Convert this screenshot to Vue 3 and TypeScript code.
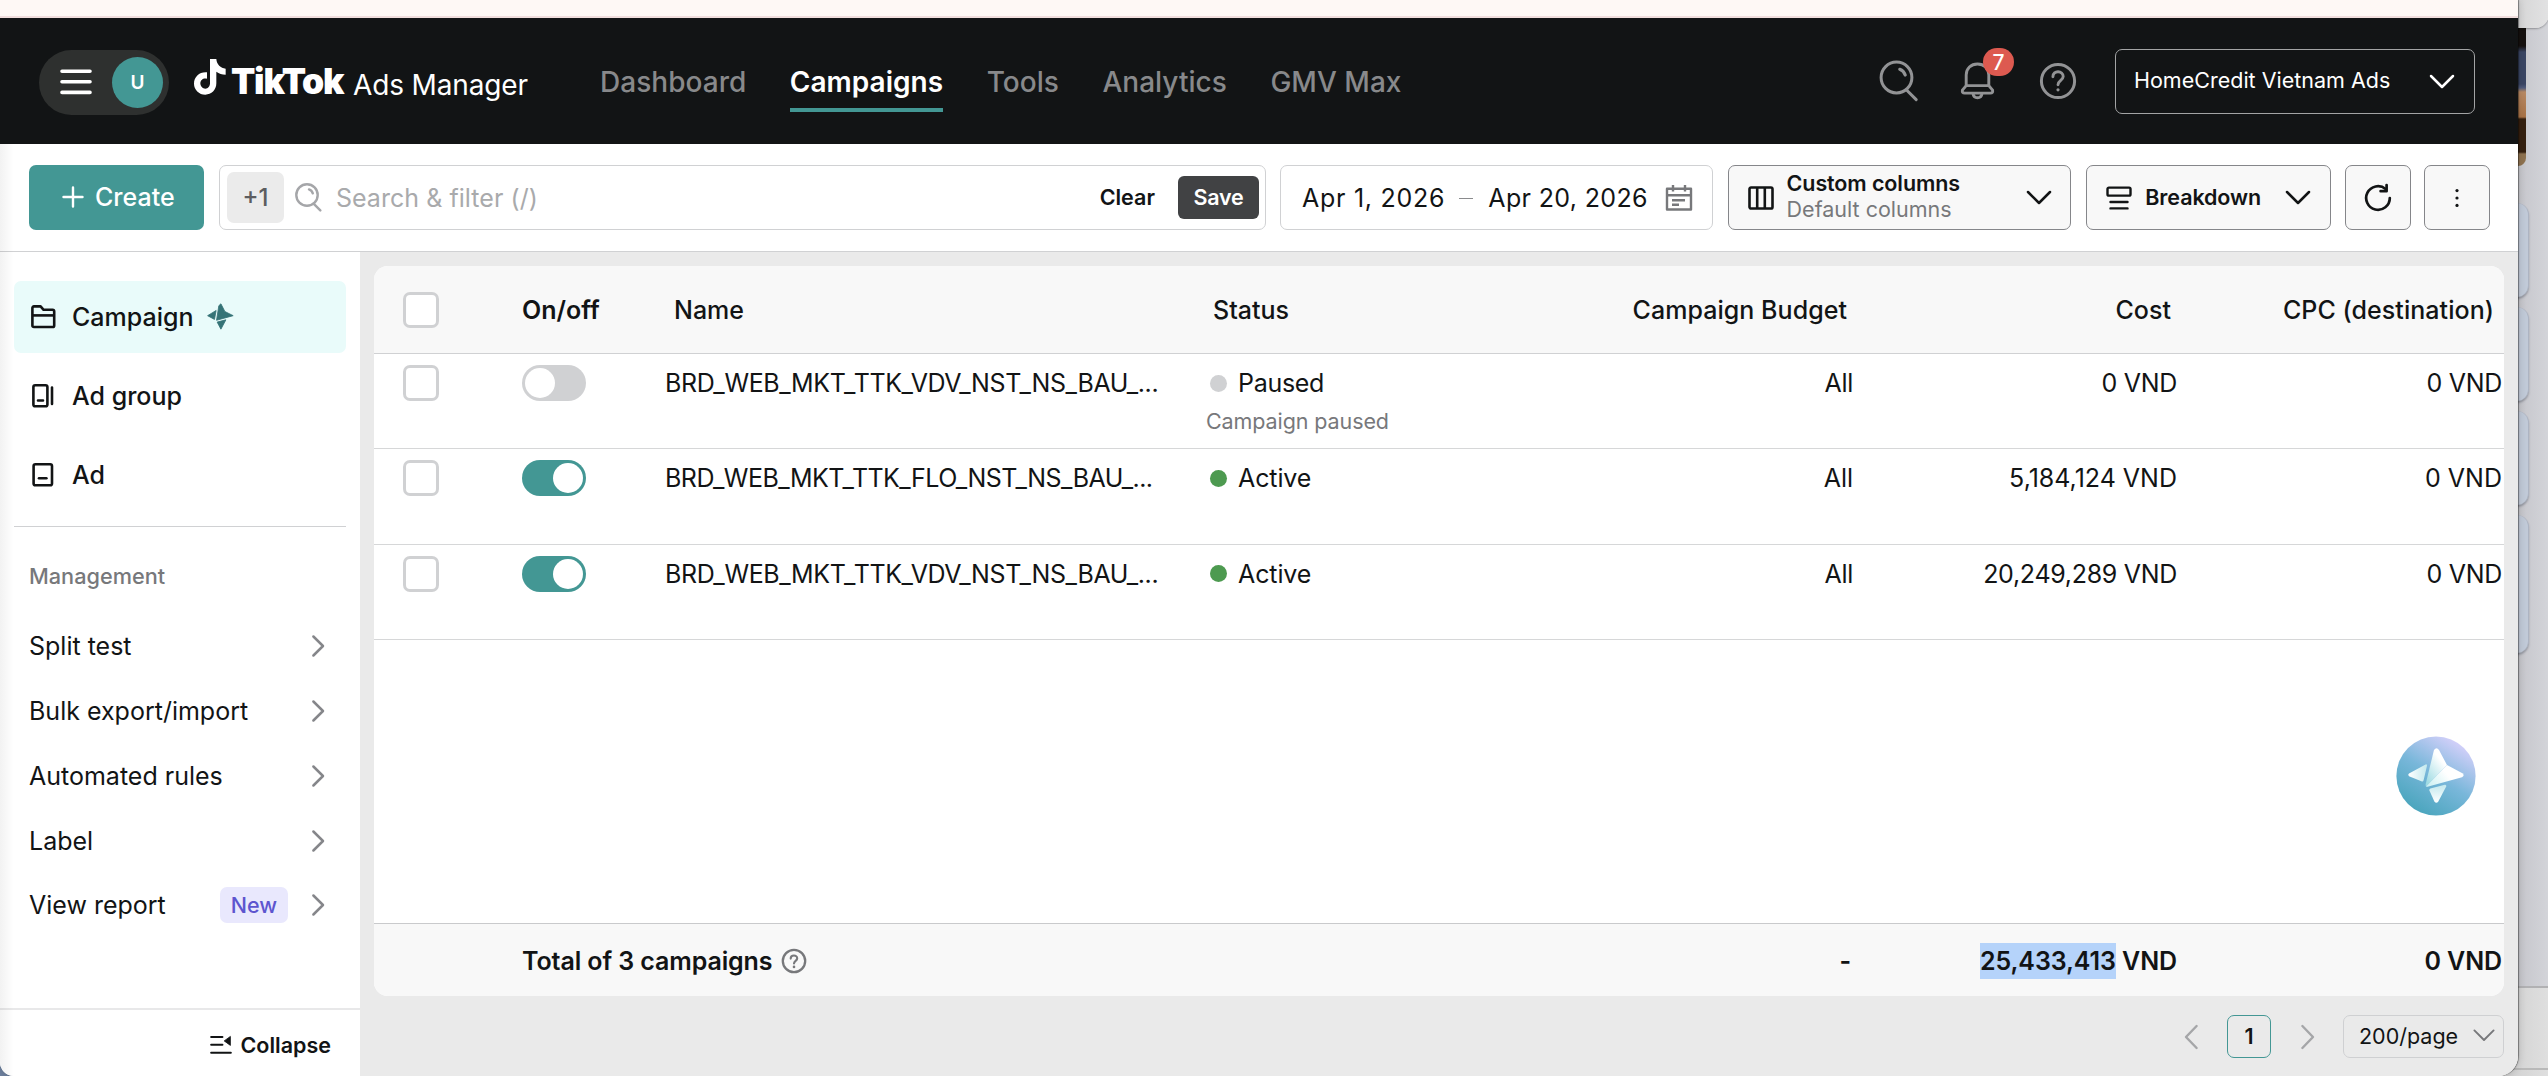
<script setup lang="ts">
interface NavItem { label: string; active?: boolean }
interface Campaign { name: string; on: boolean; status: string; note?: string; budget: string; cost: string; cpc: string }

const nav: NavItem[] = [
  { label: 'Dashboard' },
  { label: 'Campaigns', active: true },
  { label: 'Tools' },
  { label: 'Analytics' },
  { label: 'GMV Max' },
]

const management: { label: string; badge?: string }[] = [
  { label: 'Split test' },
  { label: 'Bulk export/import' },
  { label: 'Automated rules' },
  { label: 'Label' },
  { label: 'View report', badge: 'New' },
]

const campaigns: Campaign[] = [
  { name: 'BRD_WEB_MKT_TTK_VDV_NST_NS_BAU_...', on: false, status: 'Paused', note: 'Campaign paused', budget: 'All', cost: '0 VND', cpc: '0 VND' },
  { name: 'BRD_WEB_MKT_TTK_FLO_NST_NS_BAU_...', on: true, status: 'Active', budget: 'All', cost: '5,184,124 VND', cpc: '0 VND' },
  { name: 'BRD_WEB_MKT_TTK_VDV_NST_NS_BAU_...', on: true, status: 'Active', budget: 'All', cost: '20,249,289 VND', cpc: '0 VND' },
]
</script>

<template>
  <div class="desktop">
    <!-- slivers of the windows lying behind -->
    <div class="behind corner-card"></div>
    <div class="behind photo"></div>
    <div class="behind tile t1"></div>
    <div class="behind tile t2"></div>
    <div class="behind tile t3"></div>
    <div class="behind tile t4"></div>
    <div class="behind shelf"></div>

    <div class="window">
      <div class="browser-strip"></div>

      <header class="topbar">
        <div class="menu-pill">
          <svg width="32" height="26" viewBox="0 0 32 26"><path d="M2 2.2H30M2 12.8H30M2 23.4H30" stroke="#fff" stroke-width="3.6" stroke-linecap="round" /></svg>
          <span class="avatar">U</span>
        </div>
        <div class="brand">
          <svg class="note" width="32" height="36" viewBox="0 0 96 108"><path fill="#fff" d="M48 0H67C68 16 80 28 95 29V47C84 47 75 44 67 38V73C67 93 52 107 34 107C15 107 0 92 0 74C0 53 17 38 39 40V59C28 56 19 63 19 73C19 82 26 89 34 89C42 89 48 82 48 73Z" /></svg>
          <span class="brand-name">TikTok</span>
          <span class="brand-sub">Ads Manager</span>
        </div>
        <nav>
          <a v-for="n in nav" :key="n.label" :class="{ active: n.active }">{{ n.label }}</a>
        </nav>
        <div class="tools">
          <svg width="40" height="42" viewBox="0 0 40 42" fill="none" stroke="#929395" stroke-width="3" stroke-linecap="round"><circle cx="17.5" cy="17.5" r="15.4" /><path d="M27.8 30.2L37.2 39.6" /><path d="M20.8 9.3Q24.8 10.8 26.2 15" stroke-width="3.2" /></svg>
          <div class="bell">
            <svg width="36" height="38" viewBox="0 0 36 38" fill="none" stroke="#929395" stroke-width="2.9" stroke-linejoin="round"><path d="M6.2 23.6V13C6.2 6.5 11 2 17.5 2S28.8 6.5 28.8 13V23.6" /><path d="M6.2 23.6H28.8L32.6 28.2Q33.2 31.1 30.4 31.1H4.6Q1.8 31.1 2.4 28.2Z" /><path d="M13 31.4Q13.4 35.8 17.5 35.8T22 31.4" /></svg>
            <span class="count">7</span>
          </div>
          <svg width="38" height="38" viewBox="0 0 38 38" fill="none" stroke="#929395" stroke-width="3" stroke-linecap="round"><circle cx="19" cy="19" r="16.6" /><path d="M13.9 14.7C13.9 7.8 24.3 8.3 24.2 14.6C24.1 18.4 19 18.4 19 22.8" stroke-width="2.9" /><circle cx="19" cy="27.8" r="1.6" fill="#929395" stroke="none" /></svg>
        </div>
        <div class="account">
          <span>HomeCredit Vietnam Ads</span>
          <svg width="26" height="15" viewBox="0 0 26 15" fill="none" stroke="#fff" stroke-width="2.5" stroke-linecap="round" stroke-linejoin="round"><path d="M2 2L13 13L24 2" /></svg>
        </div>
      </header>

      <div class="toolbar">
        <button class="create">
          <svg width="22" height="22" viewBox="0 0 22 22"><path d="M11 1.5V20.5M1.5 11H20.5" stroke="#fff" stroke-width="2.4" stroke-linecap="round" /></svg>
          Create
        </button>
        <div class="search">
          <span class="plus">+1</span>
          <svg width="27" height="29" viewBox="0 0 27 29" fill="none" stroke="#a5a6a9" stroke-width="2.4" stroke-linecap="round"><circle cx="12" cy="12" r="10.7" /><path d="M18.8 20.8L25.3 27.4" /><path d="M14 6.4Q17 7.4 17.8 10.4" /></svg>
          <span class="placeholder">Search &amp; filter (/)</span>
          <span class="clear">Clear</span>
          <span class="save">Save</span>
        </div>
        <div class="dates">
          <span class="from">Apr 1, 2026</span>
          <i class="dash"></i>
          <span>Apr 20, 2026</span>
          <svg width="28" height="28" viewBox="0 0 28 28" fill="none" stroke="#77787b" stroke-width="2.4" stroke-linejoin="round"><path d="M2 4.8H26V25.5H2Z" /><path d="M2 11.2H26M8 1V7.5M20 1V7.5M7 16.3H20M7 20.8H14" /></svg>
        </div>
        <div class="picker columns">
          <svg width="26" height="24" viewBox="0 0 26 24" fill="none" stroke="#121415" stroke-width="2.6"><rect x="1.5" y="1.5" width="23" height="21" rx="1.6" /><path d="M9.2 1.5V22.5M16.8 1.5V22.5" /></svg>
          <span class="two-line"><b>Custom columns</b><small>Default columns</small></span>
          <svg class="chev" width="26" height="15" viewBox="0 0 26 15" fill="none" stroke="#121415" stroke-width="2.5" stroke-linecap="round" stroke-linejoin="round"><path d="M2 2L13 13L24 2" /></svg>
        </div>
        <div class="picker breakdown">
          <svg width="26" height="24" viewBox="0 0 26 24" fill="none" stroke="#121415" stroke-width="2.4" stroke-linecap="round"><rect x="1.5" y="1.6" width="23" height="8" rx="1.4" /><path d="M4.5 16H21.5M4.5 22.4H21.5" /></svg>
          <b>Breakdown</b>
          <svg class="chev" width="26" height="15" viewBox="0 0 26 15" fill="none" stroke="#121415" stroke-width="2.5" stroke-linecap="round" stroke-linejoin="round"><path d="M2 2L13 13L24 2" /></svg>
        </div>
        <div class="square">
          <svg width="30" height="30" viewBox="0 0 30 30" fill="none" stroke="#121415" stroke-width="2.7" stroke-linecap="round" stroke-linejoin="round"><path d="M22.6 6A11.8 11.8 0 1 0 26.8 15" /><path d="M23.6 2V8.2H17.6" /></svg>
        </div>
        <div class="square">
          <svg width="6" height="20" viewBox="0 0 6 20" fill="#121415"><circle cx="3" cy="2.6" r="1.6" /><circle cx="3" cy="10" r="1.6" /><circle cx="3" cy="17.4" r="1.6" /></svg>
        </div>
      </div>

      <div class="body">
        <aside>
          <div class="levels">
            <a class="level selected">
              <svg width="28" height="26" viewBox="0 0 28 26" fill="none" stroke="#121415" stroke-width="2.6" stroke-linejoin="round"><path d="M2.4 21.4V4Q2.4 2.4 4 2.4H10.6L13.6 5.8H22.6Q24.2 5.8 24.2 7.4V21.4Q24.2 23 22.6 23H4Q2.4 23 2.4 21.4Z" /><path d="M2.4 11.4H24.2" /></svg>
              <span>Campaign</span>
              <svg class="spark" width="27" height="27" viewBox="0 0 26 26" fill="#357376" stroke="#357376" stroke-width=".8" stroke-linejoin="round"><path d="M13.4 .8L17.2 8.2L25.2 12.2L9.2 16.6L11.4 2.6Z" /><path d="M8.8 7.2L7.2 15.8L.6 12.2Z" /><path d="M9.8 18.4L18.2 16.2L13.4 25.2Z" /></svg>
            </a>
            <a class="level">
              <svg width="28" height="26" viewBox="0 0 28 26" fill="none" stroke="#121415" stroke-width="2.6" stroke-linecap="round"><rect x="3.4" y="2.2" width="14" height="21" rx="1.8" /><path d="M8 17.5H13M22 4.5V21" /></svg>
              <span>Ad group</span>
            </a>
            <a class="level">
              <svg width="28" height="26" viewBox="0 0 28 26" fill="none" stroke="#121415" stroke-width="2.6" stroke-linecap="round"><rect x="3.6" y="2.2" width="18.4" height="21" rx="1.8" /><path d="M9 16.3H16.4" /></svg>
              <span>Ad</span>
            </a>
          </div>
          <div class="group-title">Management</div>
          <a v-for="m in management" :key="m.label" class="manage">
            <span>{{ m.label }}</span>
            <em v-if="m.badge">{{ m.badge }}</em>
            <svg width="15" height="24" viewBox="0 0 15 24" fill="none" stroke="#85868a" stroke-width="2.5" stroke-linecap="round" stroke-linejoin="round"><path d="M2.4 2.5L12 12L2.4 21.5" /></svg>
          </a>
          <div class="collapse">
            <svg width="22" height="20" viewBox="0 0 22 20"><path d="M1.2 2H12.4M1.2 9.8H12.4M1.2 17.8H20.8" stroke="#121415" stroke-width="2.1" stroke-linecap="round" /><path d="M20.4 1.4V10.4L14.2 5.9Z" fill="#121415" stroke="#121415" stroke-width=".8" stroke-linejoin="round" /></svg>
            Collapse
          </div>
        </aside>

        <main>
          <section class="card">
            <div class="row head">
              <div><i class="box"></i></div>
              <div class="onoff">On/off</div>
              <div class="h">Name</div>
              <div class="h">Status</div>
              <div class="num">Campaign Budget</div>
              <div class="num">Cost</div>
              <div class="num cpc">CPC (destination)</div>
            </div>
            <div v-for="(c, i) in campaigns" :key="i" class="row line">
              <div><i class="box"></i></div>
              <div><i class="toggle" :class="{ on: c.on }"></i></div>
              <div class="name">{{ c.name }}</div>
              <div class="status">
                <p><i class="dot" :class="{ live: c.on }"></i>{{ c.status }}</p>
                <small v-if="c.note">{{ c.note }}</small>
              </div>
              <div class="num">{{ c.budget }}</div>
              <div class="num">{{ c.cost }}</div>
              <div class="num">{{ c.cpc }}</div>
            </div>
            <div class="blank">
              <svg class="assistant" width="80" height="80" viewBox="0 0 80 80">
                <defs>
                  <linearGradient id="orb" x1="0.25" y1="0.95" x2="0.8" y2="0.08"><stop offset="0" stop-color="#4aa5bd" /><stop offset=".5" stop-color="#79b7da" /><stop offset="1" stop-color="#d4d0fa" /></linearGradient>
                  <linearGradient id="up" x1=".8" y1=".1" x2=".2" y2="1"><stop offset=".2" stop-color="#fff" /><stop offset="1" stop-color="#9edbe3" /></linearGradient>
                  <linearGradient id="side" x1="1" y1=".3" x2="0" y2=".8"><stop offset=".4" stop-color="#fff" /><stop offset="1" stop-color="#cdf1f3" /></linearGradient>
                  <linearGradient id="left" x1="0" y1=".5" x2="1" y2=".5"><stop offset="0" stop-color="#fff" /><stop offset="1" stop-color="#c3e9ee" /></linearGradient>
                  <linearGradient id="down" x1=".5" y1="1" x2=".5" y2="0"><stop offset="0" stop-color="#fff" /><stop offset="1" stop-color="#c3e9ee" /></linearGradient>
                </defs>
                <circle cx="40" cy="40" r="39.6" fill="url(#orb)" />
                <path d="M38 14Q40.5 10.5 43 14L51 29L30 50.5Q29.5 49.5 29.8 47.5Z" fill="url(#up)" />
                <path d="M51 29L66.4 37.2Q69 39.5 66 41.2L31.5 50.8Q30.4 50.9 30 50.4Z" fill="url(#side)" />
                <path d="M29.6 28.4Q31.3 27.9 31 29.8L27.6 44.2Q27.1 46 25.4 45.2L13 40.2Q11.4 39 13 37.6Z" fill="url(#left)" />
                <path d="M34.4 52.6L48.8 48.8Q50.8 48.6 50.2 50.5L42.3 65.4Q40.3 68 38.4 65.4L33.4 54.6Q33 53.1 34.4 52.6Z" fill="url(#down)" />
              </svg>
            </div>
            <div class="row foot">
              <div></div>
              <div class="total">Total of 3 campaigns
                <svg width="26" height="26" viewBox="0 0 26 26" fill="none" stroke="#77787b" stroke-width="2.3" stroke-linecap="round"><circle cx="13" cy="13" r="11.2" /><path d="M9.7 10.6C9.7 6.4 16.3 6.6 16.2 10.4C16.1 12.8 13 12.9 13 15.4" stroke-width="2.1" /><circle cx="13" cy="18.9" r="1.3" fill="#77787b" stroke="none" /></svg>
              </div>
              <div class="num">-</div>
              <div class="num"><mark>25,433,413</mark> VND</div>
              <div class="num">0 VND</div>
            </div>
          </section>
          <div class="pager">
            <svg width="16" height="26" viewBox="0 0 16 26" fill="none" stroke="#a5a6a8" stroke-width="2.4" stroke-linecap="round" stroke-linejoin="round"><path d="M13.6 2L3 13L13.6 24" /></svg>
            <span class="page">1</span>
            <svg width="16" height="26" viewBox="0 0 16 26" fill="none" stroke="#a5a6a8" stroke-width="2.4" stroke-linecap="round" stroke-linejoin="round"><path d="M2.4 2L13 13L2.4 24" /></svg>
            <span class="size">200/page
              <svg width="22" height="13" viewBox="0 0 22 13" fill="none" stroke="#77787b" stroke-width="1.9" stroke-linecap="round" stroke-linejoin="round"><path d="M1.4 1.4L11 11L20.6 1.4" /></svg>
            </span>
          </div>
        </main>
      </div>
      <div class="edge-shade"></div>
    </div>
  </div>
</template>

<style>
body { margin: 0; overflow: hidden; }
</style>

<style scoped>
.desktop { position: relative; width: 2548px; height: 1076px; overflow: hidden; background: linear-gradient(90deg, #6f829f 0 60px, #c2c2c8 2510px, #d3d4d9 2548px); font-family: Inter, "Noto Sans", sans-serif; font-size: 25px; color: #121415; }
.desktop * { box-sizing: border-box; }
svg { display: block; flex: none; }
i { display: block; flex: none; }
small { font-size: 21.5px; }

.behind { position: absolute; }
.corner-card { left: 2500px; top: -10px; width: 49px; height: 38px; border-radius: 0 0 14px 0; background: linear-gradient(90deg, #cfcfcf, #e2e2e3); box-shadow: 0 1px 2px rgba(0, 0, 0, .3); z-index: 1; }
.photo { left: 2500px; top: 20px; width: 28px; height: 148px; border-radius: 0 0 10px 0; border: solid #c9cace; border-width: 0 2px 2px 0; background: linear-gradient(#15110f 0 26px, #3b4664 32px 64px, #535e7e 68px, #b98a64 72px, #a97346 97px, #35200f 99px 132px, #8f7350 134px 148px); }
.tile { left: 2500px; width: 29px; border-radius: 0 12px 12px 0; background: #c1cad8; border-right: 1px solid #adb4c2; box-shadow: 0 2px 2px rgba(60, 65, 80, .35); }
.t1 { top: 203px; height: 94px; }
.t2 { top: 307px; height: 94px; }
.t3 { top: 411px; height: 94px; }
.t4 { top: 515px; height: 138px; }
.shelf { left: 2500px; top: 986px; width: 48px; height: 90px; border-top: 2px solid #b1b1b3; background: linear-gradient(transparent 80px, #b9b9b9 80px 82px, transparent 82px), linear-gradient(90deg, #cfcfcf, #dfdfdf); }

.window { position: relative; z-index: 2; display: flex; flex-direction: column; width: 2518px; height: 1076px; background: #fff; border-radius: 0 0 20px 14px; overflow: hidden; box-shadow: 1px 0 1px rgba(0, 0, 0, .4), 0 0 8px rgba(0, 0, 0, .2); }
.edge-shade { position: absolute; left: 0; top: 144px; width: 14px; bottom: 0; background: linear-gradient(90deg, rgba(0, 0, 0, .05), transparent); }
.browser-strip { height: 18px; flex: none; background: #fef8f5; border-bottom: 2px solid #f1dedd; }

.topbar { display: flex; align-items: center; flex: none; height: 126px; padding: 0 43px 0 39px; background: #121415; color: #fff; }
.menu-pill { display: flex; align-items: center; justify-content: space-between; width: 130px; height: 65px; margin-top: 2px; padding: 0 6px 0 21px; border-radius: 33px; background: #2e302f; }
.avatar { display: flex; align-items: center; justify-content: center; width: 51px; height: 51px; border-radius: 50%; background: #439794; font-size: 19px; font-weight: 600; }
.brand { display: flex; align-items: center; width: 406px; height: 126px; margin-left: 25px; }
.note { margin-top: -8px; }
.brand-name { margin: 1px 0 0 5px; width: 121px; font-size: 35.5px; font-weight: 900; letter-spacing: -1.25px; white-space: nowrap; }
.brand-sub { margin: 8px 0 0 1px; font-size: 28px; letter-spacing: -.15px; white-space: nowrap; }
nav { display: flex; gap: 43.5px; padding-top: 1px; font-size: 28px; font-weight: 500; line-height: 55px; letter-spacing: .03px; color: #88898b; white-space: nowrap; }
nav a { height: 53px; }
nav .active { color: #fff; font-weight: 600; box-shadow: 0 4px 0 #439794; }
.tools { display: flex; align-items: center; gap: 43px; margin-left: auto; }
.bell { position: relative; margin-left: -2px; }
.count { position: absolute; left: 23px; top: -14px; display: flex; align-items: center; justify-content: center; width: 31px; height: 28px; border-radius: 14px; background: #dd5a50; font-size: 21px; font-weight: 500; }
.account { display: flex; align-items: center; justify-content: space-between; width: 360px; height: 65px; margin-left: 38px; padding: 0 19px 0 18px; border: 1.5px solid #a3a4a5; border-radius: 7px; font-size: 21.5px; white-space: nowrap; }
.account span { padding-bottom: 2px; }

.toolbar { display: flex; align-items: center; flex: none; height: 108px; padding: 0 28px 0 29px; border-bottom: 1px solid #d0d1d3; background: #fff; white-space: nowrap; }
.toolbar > * { height: 65px; }
.create { display: flex; align-items: center; gap: 11px; width: 175px; padding: 0 0 1px 33px; border: 0; border-radius: 7px; background: #439794; color: #fff; font: 500 25px Inter, sans-serif; }
.search { display: flex; align-items: center; width: 1048px; margin-left: 15px; padding: 0 7px; border: 1px solid #d0d1d3; border-radius: 7px; }
.plus { display: flex; align-items: center; justify-content: center; width: 57px; height: 51px; margin-right: 11px; border-radius: 7px; background: #ebebeb; color: #5c5d60; font-weight: 500; font-size: 24px; }
.placeholder { margin-left: 14px; color: #a9aaac; letter-spacing: .05px; }
.clear { margin-left: auto; padding-bottom: 1px; font-size: 21.5px; font-weight: 600; }
.save { display: flex; align-items: center; justify-content: center; width: 81px; height: 43px; margin: 0 -1px 0 23px; padding-bottom: 1px; border-radius: 6px; background: #414244; color: #fff; font-size: 21.5px; font-weight: 600; letter-spacing: -.2px; }
.dates { display: flex; align-items: center; width: 433px; margin-left: 14px; padding: 0 19px 0 21px; border: 1px solid #d0d1d3; border-radius: 7px; letter-spacing: .35px; }
.from { letter-spacing: .75px; }
.dash { width: 14px; height: 1.5px; margin: 2px 15px 0 14px; background: #8a8b8d; }
.dates svg { margin-left: auto; }
.picker { display: flex; align-items: center; border: 1.5px solid #85868a; border-radius: 7px; background: #f8f8f8; font-size: 21.5px; }
.picker b { font-weight: 600; }
.columns { width: 344px; margin-left: 15px; padding: 0 18px 0 19px; }
.two-line { display: flex; flex-direction: column; margin: -3px 0 0 13px; line-height: 26px; }
.two-line b { letter-spacing: -.1px; }
.two-line small { color: #77787b; }
.chev { margin-left: auto; }
.breakdown { width: 245px; margin-left: 15px; padding: 0 19px; }
.breakdown b { margin: -1px 0 0 13px; letter-spacing: -.1px; }
.square { display: flex; align-items: center; justify-content: center; width: 66px; margin-left: 14px; border: 1.5px solid #85868a; border-radius: 7px; background: #f8f8f8; }
.square + .square { margin-left: 13px; }

.body { display: flex; flex: 1; min-height: 0; }
aside { display: flex; flex-direction: column; width: 360px; background: #fff; }
.levels { display: flex; flex-direction: column; gap: 7px; margin: 29px 14px 0; padding-bottom: 15px; border-bottom: 1px solid #d0d1d3; }
.level { display: flex; align-items: center; height: 72px; padding-left: 16px; border-radius: 7px; font-weight: 500; }
.level span { margin-left: 14px; }
.selected { background: #e9fbfa; }
.spark { margin: -1px 0 0 14px; }
.group-title { height: 98px; margin: 0 0 -11px 29px; line-height: 98px; font-size: 21.7px; font-weight: 500; color: #77787b; }
.manage { display: flex; align-items: center; height: 64.75px; padding: 0 34px 0 29px; }
.manage svg { margin-left: 23px; }
.manage span { flex: 1; }
.manage em { display: flex; align-items: center; justify-content: center; width: 68px; height: 36px; padding-bottom: 1px; border-radius: 7px; background: #e9e8fd; color: #5d55cf; font-size: 21.5px; font-style: normal; font-weight: 500; }
.collapse { display: flex; align-items: center; justify-content: flex-end; gap: 9px; height: 68px; margin-top: auto; padding: 4px 29px 0 0; border-top: 2px solid #e8e8e9; font-size: 21.5px; font-weight: 600; }

main { flex: 1; display: flex; flex-direction: column; padding: 14px 14px 0; background: #eaeaea; }
.card { display: flex; flex-direction: column; height: 730px; border-radius: 14px; overflow: hidden; background: #fff; }
.row { display: grid; grid-template-columns: 148px 145px 539px 400px 249px 324px 325px; white-space: nowrap; }
.head { align-items: center; height: 88px; background: #f8f8f8; border-bottom: 1px solid #d0d1d3; font-weight: 500; }
.head .num { padding-right: 8px; letter-spacing: .05px; }
.head .cpc { padding-right: 10px; }
.onoff { font-weight: 600; }
.h { padding-left: 7px; }
.num { text-align: right; padding-right: 2px; }
.box { width: 36px; height: 36px; margin-left: 29px; border: 3px solid #d0d1d3; border-radius: 7px; background: #fff; }
.line { height: 95.3px; padding-top: 11px; line-height: 36px; border-bottom: 1px solid #d6d7d8; }
.line .num { letter-spacing: -.3px; }
.line:nth-child(3) .num { letter-spacing: 0; }
.name { margin-left: -2px; letter-spacing: -.38px; }
.line:nth-child(3) .name { letter-spacing: -.53px; }
.toggle { width: 64px; height: 36px; padding: 3px; border-radius: 18px; background: #d0d1d3; }
.toggle::before { content: ""; display: block; width: 30px; height: 30px; border-radius: 50%; background: #fff; }
.toggle.on { background: #439794; }
.toggle.on::before { margin-left: auto; }
.status p { display: flex; align-items: center; height: 36px; margin: 0; padding-left: 4px; letter-spacing: -.3px; }
.line:nth-child(n+3) .status p { letter-spacing: -.1px; }
.dot { width: 17px; height: 17px; margin-right: 11px; border-radius: 50%; background: #d0d1d3; }
.dot.live { background: #4d9a50; }
.status small { display: block; margin-top: 2px; line-height: 36px; color: #77787b; letter-spacing: -.1px; }
.blank { position: relative; flex: 1; }
.assistant { position: absolute; right: 28px; bottom: 107px; }
.foot { grid-template-columns: 148px 1084px 247px 326px 325px; align-items: center; height: 73px; padding-top: 2px; background: #f8f8f8; border-top: 1px solid #c9cacc; font-weight: 600; letter-spacing: -.1px; }
.total { display: flex; align-items: center; gap: 9px; }
mark { padding: 3px 0; background: #b5d3fa; color: inherit; }

.pager { display: flex; align-items: center; justify-content: flex-end; height: 43px; margin-top: 19px; font-size: 21.5px; }
.page { display: flex; align-items: center; justify-content: center; width: 44px; height: 43px; margin: 0 29px 0 28px; padding-bottom: 2px; border: 1.5px solid #439794; border-radius: 7px; font-weight: 600; }
.size { display: flex; align-items: center; justify-content: space-between; width: 161px; height: 43px; margin-left: 27px; padding: 0 8px 2px 15px; border: 1px solid #cfd0d2; border-radius: 7px; }
</style>
